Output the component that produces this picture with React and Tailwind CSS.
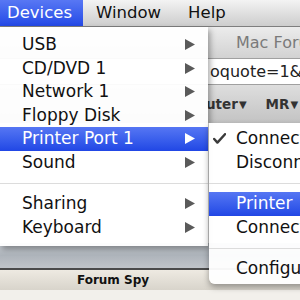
import React from "react";

const Arrow = ({ white }) => (
  <svg width="10" height="11" viewBox="0 0 10 11" className="shrink-0">
    <polygon points="0,0 10,5.5 0,11" fill={white ? "#ffffff" : "#5a5a5a"} />
  </svg>
);

const Check = () => (
  <svg width="13" height="11" viewBox="0 0 13 11">
    <path d="M1.2 6 L4.4 9.6 L12 1.2" fill="none" stroke="#3a3a3a" strokeWidth="2.4" strokeLinecap="round" strokeLinejoin="round" />
  </svg>
);

const mainItems = [
  { t: "USB" },
  { t: "CD/DVD 1" },
  { t: "Network 1" },
  { t: "Floppy Disk" },
  { t: "Printer Port 1", sel: true },
  { t: "Sound" },
  { sep: true },
  { t: "Sharing" },
  { t: "Keyboard" },
];

const subItems = [
  { t: "Connected", check: true },
  { t: "Disconnected" },
  { sep: true },
  { t: "Printer", sel: true },
  { t: "Connect…" },
  { sep: true },
  { t: "Configure…" },
];

export default function App() {
  return (
    <div className="relative w-[300px] h-[300px] overflow-hidden bg-white font-['DejaVu_Sans',sans-serif] text-[16.5px]">
      {/* menu bar */}
      <div className="flex h-[27px] items-stretch bg-gradient-to-b from-[#f3f3f3] to-[#cdcdcd] border-b border-[#7e7e7e] text-[#111]">
        <div className="flex items-center pl-[7px] pr-[11px] bg-gradient-to-b from-[#5877f4] to-[#2448e6] text-white">Devices</div>
        <div className="flex items-center pl-[13px] pr-[27px]">Window</div>
        <div className="flex items-center">Help</div>
      </div>

      {/* background window */}
      <div className="flex flex-col">
        <div className="h-[31px] flex items-center pl-[236px] bg-gradient-to-b from-[#ececec] to-[#d2d2d2] text-[#7a7a7a] text-[16px] whitespace-nowrap">Mac Forums</div>
        <div className="h-[27px] flex items-center pl-[210px] bg-white border-y border-[#a0a0a0] text-[#222] text-[16px] whitespace-nowrap">oquote=1&amp;postid</div>
        <div className="h-[38px] flex items-center bg-gradient-to-b from-[#dedede] to-[#c3c3c3] text-[#333] text-[13.5px] font-bold whitespace-nowrap">
          <span className="pl-[206px] flex items-center">uter<span className="text-[10px] ml-[1px]">▼</span></span>
          <span className="pl-[19px] flex items-center">MR<span className="text-[10px] ml-[1px]">▼</span></span>
        </div>
        <div className="h-[120px] bg-white" />
        <div className="h-[25px] bg-gradient-to-b from-[#c7ccd2] via-[#aeb4bb] to-[#c0c4c9]" />
        <div className="h-[2px] bg-[#4a4a4a]" />
        <div className="h-[20px] flex items-center bg-gradient-to-b from-[#eeeae2] to-[#d8d4cb]">
          <div className="w-[226px] text-center text-[12px] font-bold text-[#111] whitespace-nowrap">Forum Spy</div>
        </div>
        <div className="h-[10px] bg-[#f2f0eb]" />
      </div>

      {/* main menu */}
      <div className="absolute left-0 top-[27px] w-[208px] pt-[6px] pb-[7px] bg-white/95 shadow-[2px_3px_6px_rgba(0,0,0,0.35)] text-[#111] text-[17px]">
        {mainItems.map((it, i) =>
          it.sep ? (
            <div key={i} className="h-[18px] flex items-center">
              <div className="w-full h-px bg-[#dcdcdc]" />
            </div>
          ) : (
            <div
              key={i}
              className={
                "h-[23.5px] flex items-center justify-between pl-[22px] pr-[13px] " +
                (it.sel ? "bg-gradient-to-b from-[#5676f3] to-[#2146e5] text-white" : "")
              }
            >
              <span className="whitespace-nowrap">{it.t}</span>
              <Arrow white={it.sel} />
            </div>
          )
        )}
      </div>

      {/* submenu */}
      <div className="absolute left-[209px] top-[123px] w-[130px] pt-[4px] pb-[3px] bg-white/95 rounded-bl-[6px] shadow-[0px_3px_6px_rgba(0,0,0,0.35)] text-[#111] text-[17px]">
        {subItems.map((it, i) =>
          it.sep ? (
            <div key={i} className="h-[18px] flex items-center">
              <div className="w-full h-px bg-[#dcdcdc]" />
            </div>
          ) : (
            <div
              key={i}
              className={
                "h-[23.5px] flex items-center " +
                (it.sel ? "bg-gradient-to-b from-[#5676f3] to-[#2146e5] text-white" : "")
              }
            >
              <div className="w-[27px] shrink-0 pl-[4px] flex items-center">{it.check ? <Check /> : null}</div>
              <span className="whitespace-nowrap">{it.t}</span>
            </div>
          )
        )}
      </div>
    </div>
  );
}
